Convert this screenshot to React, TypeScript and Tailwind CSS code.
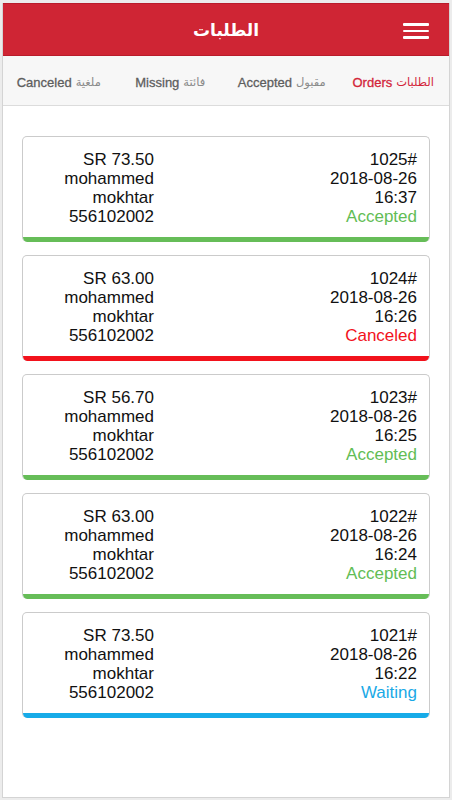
import React from "react";

type Order = {
  id: string;
  price: string;
  date: string;
  time: string;
  status: "Accepted" | "Canceled" | "Waiting";
};

const orders: Order[] = [
  { id: "1025#", price: "SR 73.50", date: "2018-08-26", time: "16:37", status: "Accepted" },
  { id: "1024#", price: "SR 63.00", date: "2018-08-26", time: "16:26", status: "Canceled" },
  { id: "1023#", price: "SR 56.70", date: "2018-08-26", time: "16:25", status: "Accepted" },
  { id: "1022#", price: "SR 63.00", date: "2018-08-26", time: "16:24", status: "Accepted" },
  { id: "1021#", price: "SR 73.50", date: "2018-08-26", time: "16:22", status: "Waiting" },
];

const statusText: Record<Order["status"], string> = {
  Accepted: "text-[#62bd55]",
  Canceled: "text-[#f2121c]",
  Waiting: "text-[#1aa9e6]",
};
const statusBar: Record<Order["status"], string> = {
  Accepted: "bg-[#66bd58]",
  Canceled: "bg-[#f2121c]",
  Waiting: "bg-[#17abe8]",
};

function Tab({ en, ar, active }: { en: string; ar: string; active?: boolean }) {
  return (
    <div className="flex-1 flex items-center justify-center whitespace-nowrap pt-[4px]">
      <span
        className={`text-[13px] [-webkit-text-stroke:0.3px] ${
          active ? "text-[#d3253a]" : "text-[#5e5e5e]"
        }`}
      >
        {en}
      </span>
      <span
        className={`ml-[4px] text-[11.5px] ${active ? "text-[#d3253a]" : "text-[#8a8a8a]"}`}
        dir="rtl"
      >
        {ar}
      </span>
    </div>
  );
}

function Card({ o }: { o: Order }) {
  return (
    <div className="rounded-[5px] border border-b-0 border-[#cbcbcb] overflow-hidden bg-white">
      <div className="flex pt-[13px] pb-[11px] pr-[12px] text-[17px] leading-[19px] text-[#111]">
        <div className="w-[131px] text-right">
          <div>{o.price}</div>
          <div>mohammed</div>
          <div>mokhtar</div>
          <div>556102002</div>
        </div>
        <div className="flex-1 text-right">
          <div>{o.id}</div>
          <div>{o.date}</div>
          <div>{o.time}</div>
          <div className={statusText[o.status]}>{o.status}</div>
        </div>
      </div>
      <div className={`h-[5px] ${statusBar[o.status]}`} />
    </div>
  );
}

export default function App() {
  return (
    <div
      className="w-[452px] h-[800px] bg-[#ececec] p-[2px] pt-[3px]"
      style={{ fontFamily: '"Liberation Sans", "DejaVu Sans", Arial, sans-serif' }}
    >
      <div className="h-full flex flex-col bg-white border border-[#d4d4d4] border-t-0">
        <div className="h-[53px] bg-[#cf2534] border-y border-[#b91c2b] flex items-center relative">
          <div className="flex-1 text-center text-white text-[17px] font-bold pt-[2px]" dir="rtl">
            الطلبات
          </div>
          <div className="absolute right-[20px] top-[19px] flex flex-col gap-[4px]">
            <div className="w-[26px] h-[2.5px] bg-white rounded-[1px]" />
            <div className="w-[26px] h-[2.5px] bg-white rounded-[1px]" />
            <div className="w-[26px] h-[2.5px] bg-white rounded-[1px]" />
          </div>
        </div>
        <div className="h-[50px] bg-[#f7f7f7] border-b border-[#dcdcdc] flex">
          <Tab en="Canceled" ar="ملغية" />
          <Tab en="Missing" ar="فائتة" />
          <Tab en="Accepted" ar="مقبول" />
          <Tab en="Orders" ar="الطلبات" active />
        </div>
        <div className="flex flex-col gap-[13px] px-[19px] pt-[30px]">
          {orders.map((o) => (
            <Card key={o.id} o={o} />
          ))}
        </div>
      </div>
    </div>
  );
}
